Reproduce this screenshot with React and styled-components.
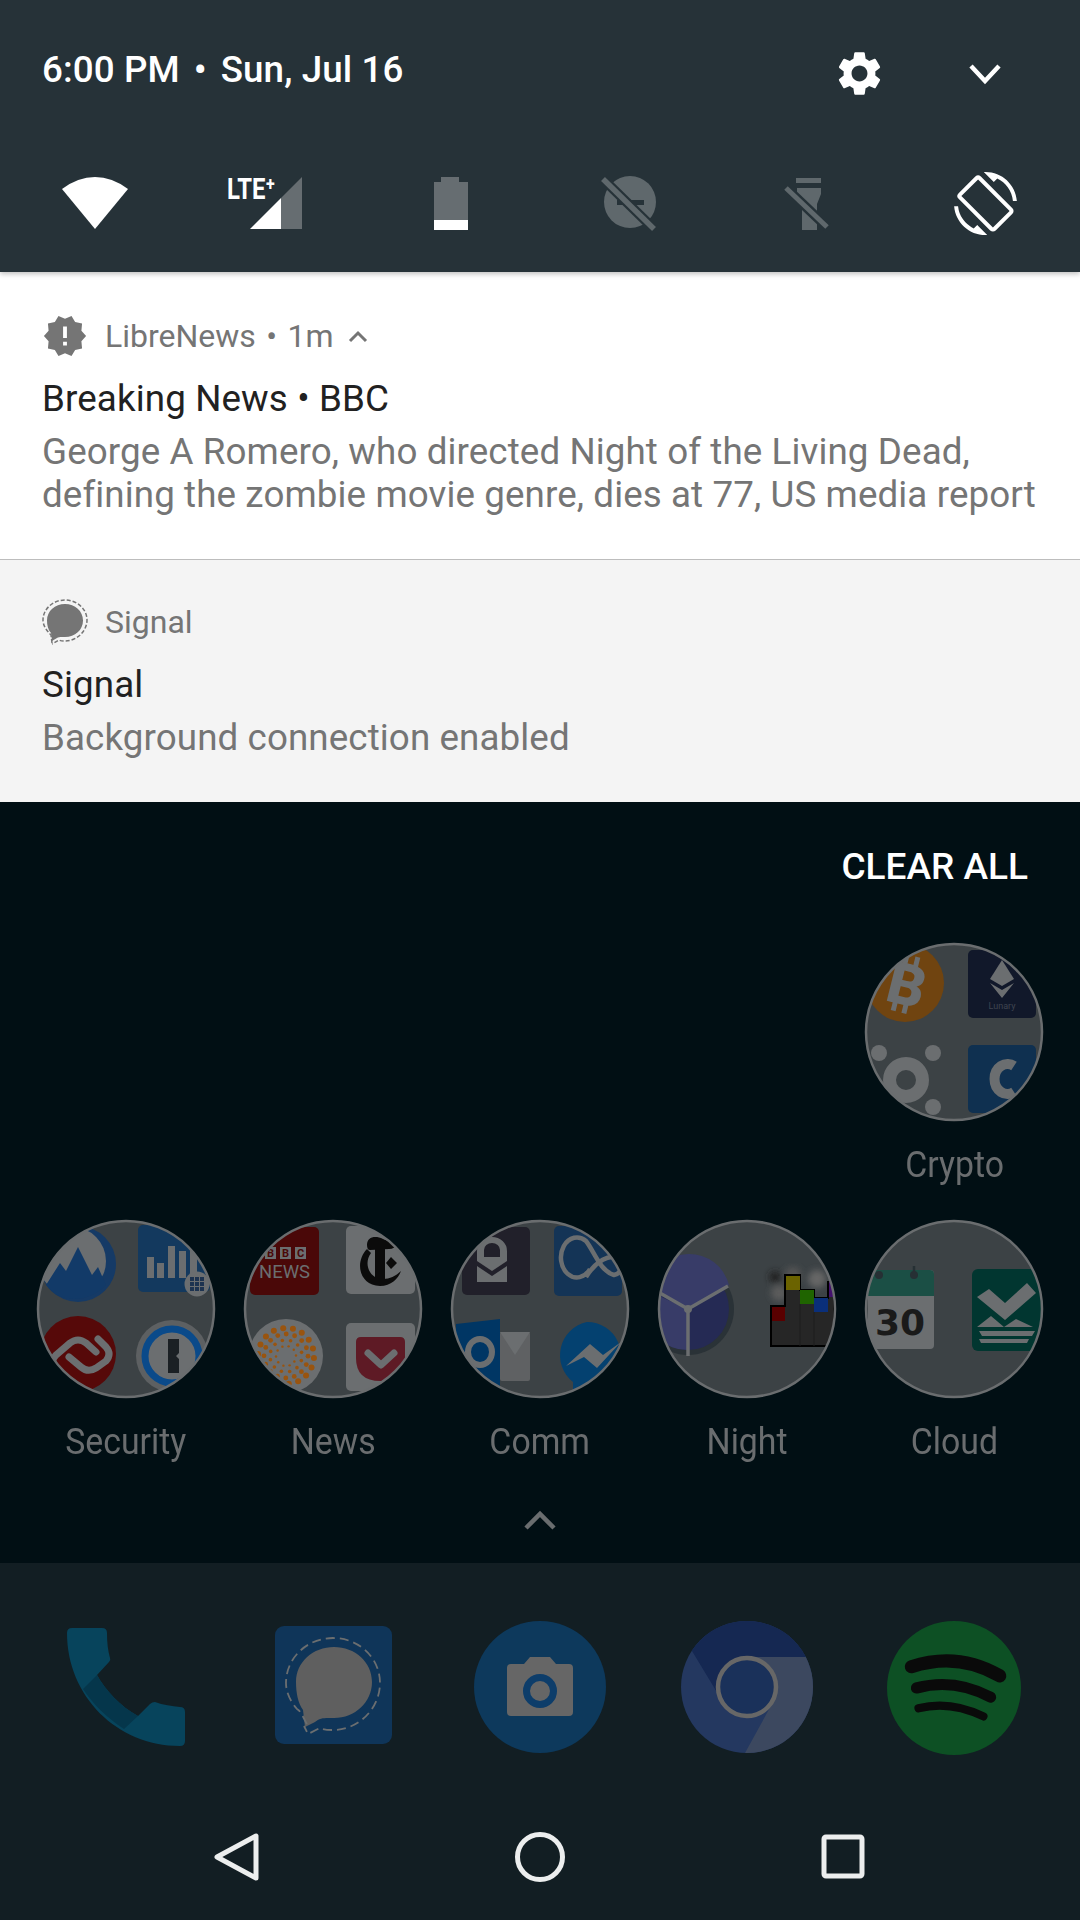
import React, { useId } from 'react';
import styled, { createGlobalStyle } from 'styled-components';
import { MdSettings, MdScreenRotation, MdNewReleases } from 'react-icons/md';

const GlobalStyle = createGlobalStyle`
  html, body {
    margin: 0;
    background: #010f14;
  }
  * { box-sizing: border-box; }
`;

const Screen = styled.div`
  width: 1080px;
  height: 1920px;
  overflow: hidden;
  display: flex;
  flex-direction: column;
  font-family: Roboto, "Liberation Sans", sans-serif;
`;

const Shade = styled.header`
  position: relative;
  height: 272px;
  flex: none;
  background: #263238;
  box-shadow: 0 2px 5px rgba(0, 0, 0, .25);
  color: #fff;
  padding: 0 6px;
`;

const ShadeTop = styled.div`
  height: 147px;
  display: grid;
  grid-template-columns: 1fr 74px 178px;
  align-items: center;
  padding: 0 0 0 36px;
`;

const DateLine = styled.div`
  font-size: 36.75px;
  font-weight: 500;
  line-height: 44px;
  letter-spacing: .1px;
  margin-bottom: 8px;
  white-space: pre;
`;

const DateDot = styled.span`
  margin: 0 14px;
`;

const TopIcon = styled.div`
  display: flex;
  justify-content: center;
  align-items: center;
  color: #fff;
  svg { display: block; }
`;

const Tiles = styled.div`
  display: grid;
  grid-template-columns: repeat(6, 178px);
  height: 64px;
  margin-top: 20px;
`;

const Tile = styled.div`
  display: flex;
  justify-content: center;
  align-items: center;
  color: ${p => (p.$off ? '#5f686c' : '#fff')};
  svg { display: block; overflow: visible; }
`;

const Notification = styled.section`
  flex: none;
  background: ${p => (p.$muted ? '#f4f4f4' : '#fff')};
  border-top: ${p => (p.$muted ? '1px solid #bdbdbd' : '0')};
  padding: ${p => (p.$muted ? '39px' : '41px')} 20px 43px 42px;
`;

const NotifHead = styled.div`
  height: 46px;
  display: flex;
  align-items: center;
  color: #757575;
  font-size: 32px;
  svg { display: block; flex: none; }
`;

const AppName = styled.span`
  margin-left: 17px;
  margin-right: 14px;
  white-space: pre;
  word-spacing: 2.500px;
`;

const NotifTitle = styled.div`
  margin-top: 18px;
  font-size: 36.75px;
  line-height: 44px;
  letter-spacing: .12px;
  color: #212121;
`;

const NotifBody = styled.div`
  margin-top: 9px;
  font-size: 36.75px;
  line-height: 43px;
  letter-spacing: .1px;
  color: #757575;
  white-space: pre-line;
`;

const Wall = styled.main`
  flex: none;
  height: 761px;
  background: #010f14;
  padding-top: 43px;
  display: flex;
  flex-direction: column;
`;

const ClearAll = styled.div`
  align-self: flex-end;
  margin-right: 52px;
  font-size: 37px;
  font-weight: 500;
  line-height: 44px;
  color: #fff;
`;

const FolderGrid = styled.div`
  display: grid;
  grid-template-columns: repeat(5, 207.2px);
  row-gap: 32px;
  padding: 0 22px;
  margin-top: 53px;
`;

const FolderCell = styled.div`
  grid-column: ${p => p.$col || 'auto'};
  display: flex;
  flex-direction: column;
  align-items: center;
  svg { display: block; }
`;

const FolderLabel = styled.div`
  margin-top: 21px;
  font-size: 36.75px;
  line-height: 44px;
  color: #6a6d6f;
  transform: scaleX(.92);
`;

const Drawer = styled.div`
  display: flex;
  justify-content: center;
  margin-top: 44px;
  svg { display: block; }
`;

const Dock = styled.footer`
  flex: 1;
  background: #121e23;
  padding-top: 58px;
`;

const DockGrid = styled.div`
  display: grid;
  grid-template-columns: repeat(5, 207.2px);
  padding: 0 22px;
  justify-items: center;
  svg { display: block; }
`;

const NavBar = styled.nav`
  display: grid;
  grid-template-columns: repeat(3, 303px);
  justify-content: center;
  justify-items: center;
  margin-top: 72px;
  svg { display: block; }
`;

const FolderIcon = ({ children }) => {
  const id = useId();
  return (
    <svg width="180" height="180" viewBox="0 0 180 180">
      <defs>
        <clipPath id={id}><circle cx="90" cy="90" r="88" /></clipPath>
      </defs>
      <circle cx="90" cy="90" r="88" fill="#3c4245" />
      <g clipPath={`url(#${id})`}>{children}</g>
      <circle cx="90" cy="90" r="88" fill="none" stroke="#6a6d6f" strokeWidth="2.5" />
    </svg>
  );
};

const grey = '#6b6e70';

const Crypto = () => (
  <FolderIcon>
    <circle cx="41" cy="41" r="39" fill="#704410" />
    <g transform="rotate(14 42 42)">
      <text x="43" y="63" textAnchor="middle" fontFamily="Roboto" fontWeight="900" fontSize="58" fill={grey}>B</text>
      <path d="M36 13v10M47 13v10M36 61v10M47 61v10" stroke={grey} strokeWidth="5" />
    </g>
    <rect x="104" y="8" width="68" height="68" rx="5" fill="#11182a" />
    <path d="M138 18l12 19-12 7-12-7z" fill={grey} />
    <path d="M126 41l12 7 12-7-12 15z" fill={grey} />
    <text x="138" y="67" textAnchor="middle" fontFamily="Roboto" fontSize="9" fill="#3f4450">Lunary</text>
    <rect x="104" y="103" width="68" height="68" rx="5" fill="#0f3050" />
    <path d="M150 124a13 15 0 1 0 0 26" fill="none" stroke={grey} strokeWidth="10" />
    <circle cx="42" cy="138" r="16.5" fill="none" stroke={grey} strokeWidth="13" />
    <circle cx="15" cy="111" r="8" fill={grey} />
    <circle cx="69" cy="111" r="8" fill={grey} />
    <circle cx="69" cy="165" r="8" fill={grey} />
  </FolderIcon>
);

const Security = () => (
  <FolderIcon>
    <circle cx="42" cy="45" r="38" fill="#153a66" />
    <circle cx="36" cy="42" r="34" fill={grey} />
    <path d="M10 66l14-22 6 8 12-24 14 28 6-8 8 18q-14 14-32 14-18 0-28-14z" fill="#123a68" />
    <rect x="102" y="6" width="72" height="67" rx="5" fill="#13395e" />
    <path d="M111 38h7v21h-7zM121 44h7v15h-7zM132 27h7v32h-7zM143 32h7v27h-7zM154 30h7v29h-7z" fill={grey} />
    <circle cx="161" cy="65" r="12.5" fill={grey} />
    <path d="M154 58h4v4h-4zM159 58h4v4h-4zM164 58h4v4h-4zM154 63h4v4h-4zM159 63h4v4h-4zM164 63h4v4h-4zM154 68h4v4h-4zM159 68h4v4h-4zM164 68h4v4h-4z" fill="#1d3350" />
    <circle cx="42" cy="135" r="38" fill="#560909" />
    <path d="M18 150q-4-8 2-14l14-12q8-6 16 0l10 9M62 120l8 8q6 7 0 14l-10 7q-8 5-15-1l-12-10" fill="none" stroke={grey} strokeWidth="7" strokeLinecap="round" />
    <circle cx="136" cy="137" r="36" fill="#5d6062" />
    <circle cx="136" cy="137" r="27" fill={grey} stroke="#0a4a8a" strokeWidth="7" />
    <path d="M132 120h11v14l-3 3 3 3v14h-11z" fill="#1b2024" />
  </FolderIcon>
);

const reutersDots = [];
[[10, 10, 1.2], [16, 12, 1.8], [22, 16, 2.4], [28, 18, 3]].forEach(([r, n, s]) => {
  for (let i = 0; i < n; i++) {
    const a = (i / n) * Math.PI * 2 + r;
    reutersDots.push([43 + r * Math.cos(a), 137 + r * Math.sin(a), s]);
  }
});

const News = () => (
  <FolderIcon>
    <rect x="7" y="8" width="69" height="68" rx="5" fill="#4a0808" />
    <path d="M22 28h11v12H22zM37 28h11v12H37zM52 28h11v12H52z" fill={grey} />
    <g fontFamily="Roboto" fontWeight="700" fontSize="11" fill="#4a0808" textAnchor="middle">
      <text x="27.5" y="38">B</text>
      <text x="42.5" y="38">B</text>
      <text x="57.5" y="38">C</text>
    </g>
    <text x="16" y="59" fontFamily="Roboto" fontSize="19" fill={grey} textLength="51" lengthAdjust="spacingAndGlyphs">NEWS</text>
    <rect x="103" y="7" width="69" height="68" rx="5" fill={grey} />
    <path d="M124 30C112 42 115 66 137 67C148 67 155 60 158 52C150 60 140 62 132 58C124 53 122 42 128 34Z" fill="#0b0b0b" />
    <path d="M124 26C124 18 132 16 140 20C146 23 152 22 153 17C156 22 154 30 146 30L127 31C125 31 124 29 124 26Z" fill="#0b0b0b" />
    <path d="M132 30h10v30h-10zM148 38l6 6-6 6-5-6z" fill="#0b0b0b" />
    <circle cx="43" cy="137" r="37" fill={grey} />
    {reutersDots.map(([x, y, s], i) => <circle key={i} cx={x} cy={y} r={s} fill="#99540f" />)}
    <rect x="103" y="104" width="69" height="68" rx="5" fill={grey} />
    <path d="M113 123q0-5 5-5h39q5 0 5 5v16q0 23-24.500 23T113 139z" fill="#5e1a25" />
    <path d="M125 134l13 12 13-12" fill="none" stroke={grey} strokeWidth="7" strokeLinecap="round" strokeLinejoin="round" />
  </FolderIcon>
);

const Comm = () => (
  <FolderIcon>
    <rect x="12" y="8" width="68" height="68" rx="5" fill="#21202a" />
    <path d="M27 42v-10a15 14 0 0 1 30 0v10l-15 10zM27 47l15 10 15-10v16H27z" fill={grey} />
    <path d="M34 38v-7a8 7 0 0 1 16 0v7z" fill="#21202a" />
    <rect x="104" y="7" width="68" height="70" rx="5" fill="#143456" />
    <path d="M140 50a16 20 0 1 1-4-28c8 10 14 30 28 34a9 9 0 0 0 4-16c-8-6-22 2-32 18" fill="none" stroke={grey} strokeWidth="4.500" />
    <rect x="50" y="113" width="30" height="49" rx="2" fill="#5f6163" />
    <path d="M50 113h30l-15 23z" fill={grey} />
    <path d="M6 105l44-5v67l-44-5z" fill="#003664" />
    <ellipse cx="30" cy="133" rx="12" ry="13" fill="none" stroke={grey} strokeWidth="6" />
    <path d="M137 103a34 34 0 0 1 26 56l-40 16v-12a34 34 0 0 1 14-60z" fill="#044170" />
    <path d="M116 147l24-22 13 11 18-13-24 26-13-11z" fill={grey} />
  </FolderIcon>
);

const Night = () => {
  const id = useId();
  return (
    <FolderIcon>
      <circle cx="31" cy="90" r="46" fill="#2a3237" />
      <circle cx="31" cy="90" r="41" fill="#252a54" />
      <path d="M31 90L-8 68A41 41 0 0 1 72 66zM31 90v41a41 41 0 0 1-42-41l2-18z" fill="#383c68" />
      <path d="M31 90L71 67M31 90L-4 70M31 90v47" stroke={grey} strokeWidth="3.500" />
      <circle cx="31" cy="90" r="4" fill={grey} />
      <defs>
        <filter id={id}><feGaussianBlur stdDeviation="3" /></filter>
      </defs>
      <g filter={`url(#${id})`}>
        <circle cx="118" cy="58" r="6" fill="#222" />
        <circle cx="136" cy="56" r="8" fill="#555" />
        <circle cx="160" cy="60" r="9" fill="#666" />
        <circle cx="122" cy="74" r="8" fill="#5c5c5c" />
      </g>
      <path d="M114 87h14V56h15v15h14v8h14v-16h6v64h-63z" fill="#262626" stroke="#000" strokeWidth="2" />
      <rect x="115" y="88" width="13" height="14" fill="#5a0000" />
      <rect x="129" y="57" width="14" height="14" fill="#6b6300" />
      <rect x="143" y="71" width="14" height="14" fill="#1f6400" />
      <rect x="157" y="79" width="14" height="14" fill="#0a2f7a" />
      <rect x="172" y="63" width="8" height="15" fill="#43106c" />
      <path d="M143 85v42M157 93v34" stroke="#1c1c1c" strokeWidth="1" />
    </FolderIcon>
  );
};

const Cloud = () => (
  <FolderIcon>
    <rect x="4" y="51" width="66" height="79" rx="4" fill={grey} />
    <path d="M4 77V55q0-4 4-4h58q4 0 4 4v22z" fill="#1b4f45" />
    <circle cx="15" cy="56" r="4" fill="#263034" />
    <circle cx="50" cy="56" r="4" fill="#263034" />
    <path d="M50 47v8" stroke="#263034" strokeWidth="2.500" />
    <text x="36" y="116" textAnchor="middle" fontFamily="DejaVu Sans" fontWeight="700" fontSize="36" fill="#1a1a1a">30</text>
    <rect x="108" y="50" width="70" height="82" rx="6" fill="#013630" />
    <path d="M113 78l12-8 16 14 22-20 9 10-31 27z" fill={grey} />
    <path d="M113 108l14-11 13 11 12-8 17 8zM115 112h56l-3 5h-50zM115 120h50l-2 4h-46z" fill={grey} />
  </FolderIcon>
);

const PhoneIcon = () => (
  <svg width="132" height="132" viewBox="0 0 132 132">
    <path d="M7 12Q7 7 12 7H42Q47 7 47 12C47 22 48 30 50 37Q51 39 49 41L37 54C46 70 60 85 78 95L90 83Q92 81 95 81C103 84 112 85 120 86Q125 86 125 91V120Q125 125 120 125C57 125 7 75 7 12Z" fill="#07445c" />
    <path d="M37 54C46 70 60 85 78 95L64 108C47 97 32 82 23 68Z" fill="#05364b" />
  </svg>
);

const SignalIcon = () => (
  <svg width="132" height="132" viewBox="0 0 132 132">
    <rect x="8" y="5" width="117" height="118" rx="9" fill="#0f3559" />
    <path d="M67 26c21 0 38 15 38 35s-17 36-38 36c-7 0-14-1-19 4l-10 5-2-17c-5-7-7-17-7-28 0-20 17-35 38-35z" fill="#5f5f5f" />
    <path d="M40 103c-4-6-5-12-10-15-7-8-11-17-11-26 0-25 21-45 47-45s47 20 47 45-21 47-47 47c-4 0-9 0-13-2l-12 6-4-8" fill="none" stroke="#6b6e70" strokeWidth="1.800" strokeDasharray="9 5" />
  </svg>
);

const CameraIcon = () => (
  <svg width="132" height="132" viewBox="0 0 132 132">
    <circle cx="66" cy="66" r="66" fill="#0d395c" />
    <path d="M37 43h13l6-7h20l6 7h13q4 0 4 4v44q0 4-4 4H37q-4 0-4-4V47q0-4 4-4z" fill="#666" />
    <circle cx="66" cy="70" r="13.500" fill="#666" stroke="#0d3d6a" strokeWidth="7" />
  </svg>
);

const ChromeIcon = () => {
  const id = useId();
  return (
    <svg width="132" height="132" viewBox="0 0 132 132">
      <defs>
        <clipPath id={id}><circle cx="66" cy="66" r="66" /></clipPath>
      </defs>
      <g clipPath={`url(#${id})`}>
        <rect width="132" height="132" fill="#243860" />
        <path d="M0 0h132v36H66L37 73 11 30z" fill="#152852" />
        <path d="M66 36h66v96H64L92 81z" fill="#3c485f" />
      </g>
      <circle cx="66" cy="66" r="29" fill="#1a315a" stroke="#676767" strokeWidth="4.500" />
    </svg>
  );
};

const SpotifyIcon = () => (
  <svg width="134" height="134" viewBox="0 0 132 132">
    <circle cx="66" cy="66" r="66" fill="#0d5024" />
    <g fill="none" stroke="#0a0a0a" strokeLinecap="round">
      <path d="M24 45Q70 30 111 54" strokeWidth="13" />
      <path d="M29 66Q66 56 102 75" strokeWidth="11" />
      <path d="M31 86Q62 78 95 94" strokeWidth="8" />
    </g>
  </svg>
);

const TILE_GREY = '#666d71';
const SHADE_BG = '#263238';

const App = () => (
  <Screen>
    <GlobalStyle />
    <Shade>
      <ShadeTop>
        <DateLine>6:00 PM<DateDot>•</DateDot>Sun, Jul 16</DateLine>
        <TopIcon><MdSettings size={53} /></TopIcon>
        <TopIcon>
          <svg width="34" height="22" viewBox="0 0 34 22">
            <path d="M3 3l14 15L31 3" fill="none" stroke="#fff" strokeWidth="4.500" />
          </svg>
        </TopIcon>
      </ShadeTop>
      <Tiles>
        <Tile>
          <svg width="66" height="52" viewBox="0 0 66 52">
            <path d="M33 52L0 12Q16 0 33 0Q50 0 66 12Z" fill="#fff" />
          </svg>
        </Tile>
        <Tile>
          <svg width="76" height="52" viewBox="0 0 76 52" style={{ marginRight: 16 }}>
            <text x="0" y="22" fontFamily="Roboto" fontWeight="700" fontSize="29.500" fill="#fff" textLength="48" lengthAdjust="spacingAndGlyphs">LTE⁺</text>
            <path d="M23 52L54 21V52Z" fill="#fff" />
            <path d="M54 21L75 0V52H54Z" fill={TILE_GREY} />
          </svg>
        </Tile>
        <Tile>
          <svg width="34" height="53" viewBox="0 0 34 53">
            <path d="M7 0h18v5h9v38H0V5h7z" fill={TILE_GREY} />
            <path d="M0 43h34v10H0z" fill="#fff" />
          </svg>
        </Tile>
        <Tile $off>
          <svg width="76" height="72" viewBox="0 0 76 72">
            <circle cx="39" cy="35" r="26" fill="#5f686c" />
            <path d="M26 33h27v5H26z" fill={SHADE_BG} />
            <path d="M12 12L63 62" stroke={SHADE_BG} strokeWidth="10" />
            <path d="M12 12L63 62" stroke="#5f686c" strokeWidth="5.500" />
          </svg>
        </Tile>
        <Tile $off>
          <svg width="70" height="72" viewBox="0 0 70 72">
            <path d="M24 11h25v5H24zM25 21h24v6l-4 10v26H30V37l-5-10z" fill="#5f686c" />
            <path d="M14 21L55 60" stroke={SHADE_BG} strokeWidth="10" />
            <path d="M14 21L55 60" stroke="#5f686c" strokeWidth="5" />
          </svg>
        </Tile>
        <Tile><MdScreenRotation size={63} /></Tile>
      </Tiles>
    </Shade>

    <Notification>
      <NotifHead>
        <MdNewReleases size={46} />
        <AppName>LibreNews • 1m</AppName>
        <svg width="20" height="13" viewBox="0 0 20 13">
          <path d="M2 11l8-8 8 8" fill="none" stroke="#757575" strokeWidth="3" />
        </svg>
      </NotifHead>
      <NotifTitle>Breaking News • BBC</NotifTitle>
      <NotifBody>{'George A Romero, who directed Night of the Living Dead,\ndefining the zombie movie genre, dies at 77, US media report'}</NotifBody>
    </Notification>

    <Notification $muted>
      <NotifHead>
        <svg width="46" height="46" viewBox="0 0 46 46">
          <path d="M23 5c10 0 18 7 18 16.500S33 38 23 38c-3 0-6-.5-8 1l-5 3-1-8c-3-3-4-8-4-12.500C5 12 13 5 23 5z" fill="#757575" />
          <path d="M10 44l-1-8C4 31 1 26 1 21 1 10 11 1 23 1s22 9 22 20-10 21-22 21c-2 0-4 0-6-1l-7 4" fill="none" stroke="#757575" strokeWidth="1.500" strokeDasharray="4 2" />
        </svg>
        <AppName>Signal</AppName>
      </NotifHead>
      <NotifTitle>Signal</NotifTitle>
      <NotifBody>Background connection enabled</NotifBody>
    </Notification>

    <Wall>
      <ClearAll>CLEAR ALL</ClearAll>
      <FolderGrid>
        <FolderCell $col={5}>
          <Crypto />
          <FolderLabel>Crypto</FolderLabel>
        </FolderCell>
        <FolderCell $col={1}>
          <Security />
          <FolderLabel>Security</FolderLabel>
        </FolderCell>
        <FolderCell>
          <News />
          <FolderLabel>News</FolderLabel>
        </FolderCell>
        <FolderCell>
          <Comm />
          <FolderLabel>Comm</FolderLabel>
        </FolderCell>
        <FolderCell>
          <Night />
          <FolderLabel>Night</FolderLabel>
        </FolderCell>
        <FolderCell>
          <Cloud />
          <FolderLabel>Cloud</FolderLabel>
        </FolderCell>
      </FolderGrid>
      <Drawer>
        <svg width="36" height="24" viewBox="0 0 36 24">
          <path d="M4 20L18 6l14 14" fill="none" stroke="#6a6d6f" strokeWidth="4.500" />
        </svg>
      </Drawer>
    </Wall>

    <Dock>
      <DockGrid>
        <PhoneIcon />
        <SignalIcon />
        <CameraIcon />
        <ChromeIcon />
        <SpotifyIcon />
      </DockGrid>
      <NavBar>
        <svg width="60" height="60" viewBox="0 0 60 60">
          <path d="M49 9v42L10 30z" fill="none" stroke="#eceeee" strokeWidth="5" strokeLinejoin="round" />
        </svg>
        <svg width="60" height="60" viewBox="0 0 60 60">
          <circle cx="30" cy="30" r="22.500" fill="none" stroke="#eceeee" strokeWidth="5" />
        </svg>
        <svg width="60" height="60" viewBox="0 0 60 60">
          <rect x="11" y="10" width="38" height="39" rx="2" fill="none" stroke="#eceeee" strokeWidth="5" />
        </svg>
      </NavBar>
    </Dock>
  </Screen>
);

export default App;
